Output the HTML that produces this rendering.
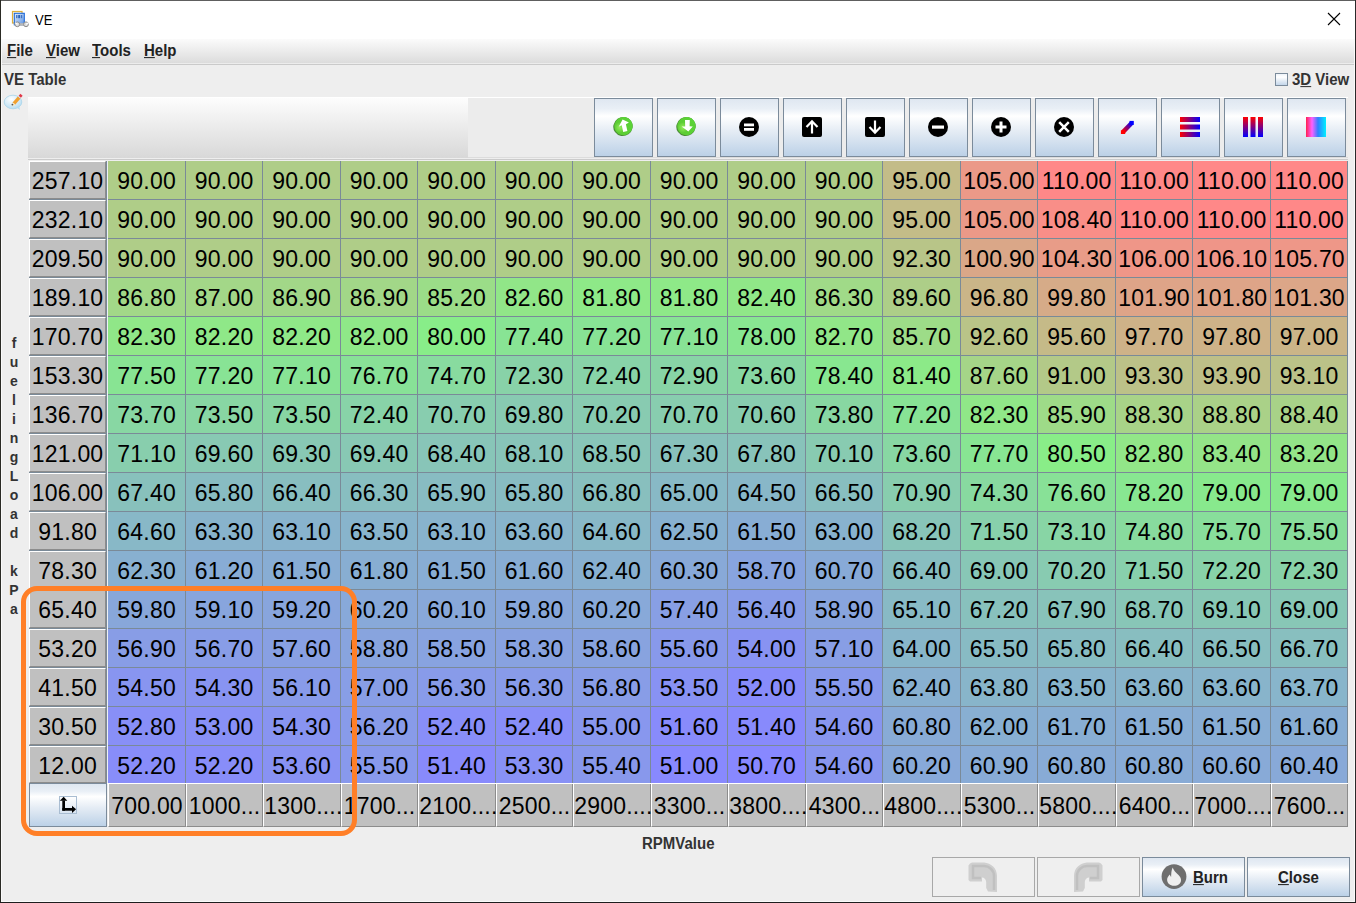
<!DOCTYPE html><html><head><meta charset="utf-8"><title>VE</title><style>
html,body{margin:0;padding:0;}
body{width:1356px;height:903px;position:relative;overflow:hidden;background:#eeeeee;font-family:"Liberation Sans",sans-serif;}
.a{position:absolute;}
.t{position:absolute;white-space:nowrap;line-height:1;}
.c{position:absolute;font-size:23px;color:#000;text-align:center;line-height:40px;letter-spacing:0.2px;text-indent:0.2px;white-space:nowrap;overflow:hidden;}
.rh{position:absolute;background:#c0c0c0;border-top:1px solid #fff;border-left:1px solid #fff;border-right:1px solid #8c8c8c;border-bottom:1px solid #8c8c8c;box-sizing:border-box;font-size:23px;line-height:38px;letter-spacing:0.2px;text-indent:0.2px;text-align:center;color:#000;white-space:nowrap;overflow:hidden;}
.hh{position:absolute;background:#c0c0c0;border-top:1px solid #fff;border-left:1px solid #fff;border-right:1px solid #8c8c8c;border-bottom:1px solid #8c8c8c;box-sizing:border-box;font-size:23px;line-height:47px;letter-spacing:0.2px;text-indent:0.2px;text-align:center;color:#000;white-space:nowrap;overflow:visible;}
.btn{position:absolute;box-sizing:border-box;border:1px solid #7b8b9b;background:linear-gradient(to bottom,#dfe7f1 0%,#e9eff6 17%,#ffffff 30%,#e6edf5 55%,#bcd1e7 100%);}
.mi{position:absolute;font-size:15px;font-weight:bold;color:#222;white-space:nowrap;line-height:1;}
.sy{transform:scaleY(1.05);transform-origin:0 12.7px;}
.u{text-decoration:underline;text-underline-offset:0.5px;}

</style></head><body>
<div class="a" style="left:0;top:0;width:1356px;height:39px;background:#fff"></div>
<div class="a" style="left:0;top:39px;width:1356px;height:24px;background:linear-gradient(to bottom,#fbfbfb,#dcdcdc)"></div>
<div class="a" style="left:0;top:63px;width:1356px;height:1px;background:#ececec"></div>
<div class="a" style="left:0;top:64px;width:1356px;height:1px;background:#cacaca"></div>
<svg class="a" style="left:11px;top:10px" width="19" height="18" viewBox="0 0 19 18">
<defs><linearGradient id="tib" x1="0" y1="0" x2="1" y2="1"><stop offset="0" stop-color="#e8f0fc"/><stop offset="1" stop-color="#5a92e2"/></linearGradient></defs>
<rect x="1.5" y="1.5" width="9.5" height="11.5" fill="#fffdf2" stroke="#dcae3c" stroke-width="1.2"/>
<rect x="3.3" y="3.3" width="10" height="11.5" fill="url(#tib)" stroke="#1f6ad8" stroke-width="1.1"/>
<rect x="5.2" y="5" width="1.2" height="3.2" fill="#2a62b8"/><rect x="7.2" y="5" width="2" height="3.2" fill="#2a62b8"/><rect x="10.2" y="5" width="1" height="3.2" fill="#2a62b8"/>
<path d="M7 14.5 H14.5" stroke="#b8b8b8" stroke-width="2.6"/>
<circle cx="6.3" cy="14.3" r="2.4" fill="#dcdcdc" stroke="#8e8e8e" stroke-width="1"/><circle cx="15" cy="14.3" r="2.4" fill="#dcdcdc" stroke="#8e8e8e" stroke-width="1"/>
<path d="M4 12.8 L6.5 14.2 M17.5 12.8 L15 14.2" stroke="#fff" stroke-width="1.2"/>
</svg>
<div class="t" style="left:35px;top:14px;font-size:13px;color:#000;transform:scaleY(1.18);transform-origin:0 11px">VE</div>
<svg class="a" style="left:1327px;top:12px" width="14" height="14" viewBox="0 0 14 14"><path d="M1 1L13 13M13 1L1 13" stroke="#000" stroke-width="1.1"/></svg>
<div class="mi sy" style="left:7px;top:43px"><span class="u">F</span>ile</div>
<div class="mi sy" style="left:46px;top:43px"><span class="u">V</span>iew</div>
<div class="mi sy" style="left:92px;top:43px"><span class="u">T</span>ools</div>
<div class="mi sy" style="left:144px;top:43px"><span class="u">H</span>elp</div>
<div class="t sy" style="left:4px;top:72px;font-size:15px;font-weight:bold;color:#333">VE Table</div>
<div class="a" style="left:1275px;top:73px;width:13px;height:13px;box-sizing:border-box;border:1px solid #7b8b9b;background:linear-gradient(to bottom,#eef3f9 0%,#ffffff 28%,#c4d6ea 100%)"></div>
<div class="t sy" style="left:1292px;top:72px;font-size:15px;font-weight:bold;color:#333">3<span class="u">D</span> View</div>
<svg class="a" style="left:0px;top:88px" width="26" height="26" viewBox="0 0 26 26">
<defs><radialGradient id="bub" cx="0.4" cy="0.3" r="0.75"><stop offset="0" stop-color="#ffffff"/><stop offset="1" stop-color="#b4dcf2"/></radialGradient></defs>
<ellipse cx="13" cy="14" rx="8.8" ry="6.8" fill="url(#bub)" stroke="#a8d4ea" stroke-width="0.8"/>
<path d="M16.5 19.5 L20 22 L19 17.5 Z" fill="#b4dcf2"/>
<path d="M13.8 15.6 L19.3 9.4" stroke="#f0a030" stroke-width="3.4"/>
<path d="M19.1 9.6 L20 8.6" stroke="#d6eaf6" stroke-width="3"/>
<path d="M19.8 8.8 L21.5 6.8" stroke="#e03848" stroke-width="3"/>
<path d="M12.3 17.6 L14.4 15.6" stroke="#f6e6c0" stroke-width="2.4"/>
<circle cx="12.4" cy="16.6" r="0.9" fill="#555"/>
</svg>
<div class="a" style="left:28px;top:97px;width:1320px;height:1px;background:#ffffff"></div>
<div class="a" style="left:28px;top:98px;width:440px;height:60px;background:linear-gradient(to bottom,#fdfdfd,#d8d8d8)"></div>
<div class="a" style="left:468px;top:98px;width:880px;height:59px;background:#ececec"></div>
<div class="a" style="left:468px;top:157px;width:880px;height:1px;background:#dcdcdc"></div>
<div class="a" style="left:28px;top:159px;width:1320px;height:1px;background:#cbcbcb"></div>
<div class="btn" style="left:594px;top:98px;width:59px;height:59px"></div>
<div class="btn" style="left:657px;top:98px;width:59px;height:59px"></div>
<div class="btn" style="left:720px;top:98px;width:59px;height:59px"></div>
<div class="btn" style="left:783px;top:98px;width:59px;height:59px"></div>
<div class="btn" style="left:846px;top:98px;width:59px;height:59px"></div>
<div class="btn" style="left:909px;top:98px;width:59px;height:59px"></div>
<div class="btn" style="left:972px;top:98px;width:59px;height:59px"></div>
<div class="btn" style="left:1035px;top:98px;width:59px;height:59px"></div>
<div class="btn" style="left:1098px;top:98px;width:59px;height:59px"></div>
<div class="btn" style="left:1161px;top:98px;width:59px;height:59px"></div>
<div class="btn" style="left:1224px;top:98px;width:59px;height:59px"></div>
<div class="btn" style="left:1287px;top:98px;width:59px;height:59px"></div>
<svg class="a" style="left:612px;top:116px" width="22" height="22" viewBox="0 0 22 22"><defs><radialGradient id="g1" cx="0.3" cy="0.45" r="0.85"><stop offset="0" stop-color="#96ec5c"/><stop offset="0.35" stop-color="#5ccc34"/><stop offset="1" stop-color="#5ad83a"/></radialGradient></defs>
<ellipse cx="11" cy="10.5" rx="9.8" ry="9.5" fill="#4a8a36" transform="rotate(-35 11 10.5)"/>
<ellipse cx="11.4" cy="10.1" rx="9.2" ry="9.1" fill="url(#g1)" transform="rotate(-35 11.4 10.1)"/>
<path d="M10.6 3.4 L16.9 6.6 L13.9 8.3 L15.4 14.9 L11.2 15.9 L9.7 9.2 L6.7 10.8 Z" fill="#fff"/></svg>
<svg class="a" style="left:675px;top:116px" width="22" height="22" viewBox="0 0 22 22"><defs><radialGradient id="g2" cx="0.3" cy="0.45" r="0.85"><stop offset="0" stop-color="#96ec5c"/><stop offset="0.35" stop-color="#5ccc34"/><stop offset="1" stop-color="#5ad83a"/></radialGradient></defs>
<ellipse cx="11" cy="10.5" rx="9.8" ry="9.5" fill="#4a8a36" transform="rotate(-35 11 10.5)"/>
<ellipse cx="11.4" cy="10.1" rx="9.2" ry="9.1" fill="url(#g2)" transform="rotate(-35 11.4 10.1)"/>
<path d="M10 3.9 L14.8 3.9 L14.6 10.3 L17.8 10.5 L13.3 15.6 L6.7 10.5 L10.2 10.4 Z" fill="#fff"/></svg>
<svg class="a" style="left:738px;top:116px" width="22" height="22" viewBox="0 0 22 22"><circle cx="11" cy="11" r="10" fill="#000"/><rect x="6" y="7.5" width="10" height="2.8" fill="#fff"/><rect x="6" y="12" width="10" height="2.8" fill="#fff"/></svg>
<svg class="a" style="left:801px;top:116px" width="22" height="22" viewBox="0 0 22 22"><rect x="1" y="1" width="20" height="20" rx="2" fill="#000"/><path d="M11 17.5 V5.5 M5.5 11 L11 5.3 L16.5 11" stroke="#fff" stroke-width="2.2" fill="none"/></svg>
<svg class="a" style="left:864px;top:116px" width="22" height="22" viewBox="0 0 22 22"><rect x="1" y="1" width="20" height="20" rx="2" fill="#000"/><path d="M11 4.5 V16.5 M5.5 11 L11 16.7 L16.5 11" stroke="#fff" stroke-width="2.2" fill="none"/></svg>
<svg class="a" style="left:927px;top:116px" width="22" height="22" viewBox="0 0 22 22"><circle cx="11" cy="11" r="10" fill="#000"/><rect x="5" y="9.5" width="12" height="3.2" fill="#fff"/></svg>
<svg class="a" style="left:990px;top:116px" width="22" height="22" viewBox="0 0 22 22"><circle cx="11" cy="11" r="10" fill="#000"/><rect x="5.5" y="9.5" width="11" height="3" fill="#fff"/><rect x="9.5" y="5.5" width="3" height="11" fill="#fff"/></svg>
<svg class="a" style="left:1053px;top:116px" width="22" height="22" viewBox="0 0 22 22"><circle cx="11" cy="11" r="10" fill="#000"/><path d="M6.2 6.2 L15.8 15.8 M15.8 6.2 L6.2 15.8" stroke="#fff" stroke-width="2.5"/></svg>
<svg class="a" style="left:1116px;top:116px" width="22" height="22" viewBox="0 0 22 22"><defs><linearGradient id="pg" x1="0" y1="1" x2="1" y2="0"><stop offset="0" stop-color="#ff0000"/><stop offset="1" stop-color="#0000ff"/></linearGradient></defs>
<path d="M7.1 15.9 L15.7 7" stroke="url(#pg)" stroke-width="4.4"/><rect x="4.9" y="14.2" width="4.3" height="3.8" fill="#ff0000"/><rect x="13.5" y="4.9" width="4.3" height="4" fill="#0000ff"/></svg>
<svg class="a" style="left:1179px;top:116px" width="22" height="22" viewBox="0 0 22 22"><defs><linearGradient id="hg" x1="0" y1="0" x2="1" y2="0"><stop offset="0" stop-color="#ff0000"/><stop offset="1" stop-color="#0000ff"/></linearGradient></defs>
<rect x="1" y="1" width="20" height="5" fill="url(#hg)"/><rect x="1" y="8.5" width="20" height="5" fill="url(#hg)"/><rect x="1" y="16" width="20" height="5" fill="url(#hg)"/></svg>
<svg class="a" style="left:1242px;top:116px" width="22" height="22" viewBox="0 0 22 22"><defs><linearGradient id="vg" x1="0" y1="0" x2="0" y2="1"><stop offset="0" stop-color="#ff0000"/><stop offset="1" stop-color="#0000ff"/></linearGradient></defs>
<rect x="1" y="1" width="5" height="20" fill="url(#vg)"/><rect x="8.5" y="1" width="5" height="20" fill="url(#vg)"/><rect x="16" y="1" width="5" height="20" fill="url(#vg)"/></svg>
<svg class="a" style="left:1305px;top:116px" width="22" height="22" viewBox="0 0 22 22"><defs><linearGradient id="sg" x1="0" y1="0" x2="1" y2="0"><stop offset="0" stop-color="#ff2050"/><stop offset="0.3" stop-color="#ff60ff"/><stop offset="0.6" stop-color="#3080ff"/><stop offset="1" stop-color="#00f0ff"/></linearGradient></defs>
<rect x="1" y="1" width="20" height="20" fill="url(#sg)"/></svg>
<div class="a" style="left:107px;top:161px;width:1241px;height:622px;background:#7a8a98"></div>
<div class="a" style="left:107px;top:161px;width:1px;height:622px;background:#eef0f4"></div>
<div class="c" style="left:108px;top:161px;width:77px;height:38px;background:#afcd88">90.00</div>
<div class="c" style="left:186px;top:161px;width:76px;height:38px;background:#afcd88">90.00</div>
<div class="c" style="left:263px;top:161px;width:77px;height:38px;background:#afcd88">90.00</div>
<div class="c" style="left:341px;top:161px;width:76px;height:38px;background:#afcd88">90.00</div>
<div class="c" style="left:418px;top:161px;width:77px;height:38px;background:#afcd88">90.00</div>
<div class="c" style="left:496px;top:161px;width:76px;height:38px;background:#afcd88">90.00</div>
<div class="c" style="left:573px;top:161px;width:77px;height:38px;background:#afcd88">90.00</div>
<div class="c" style="left:651px;top:161px;width:76px;height:38px;background:#afcd88">90.00</div>
<div class="c" style="left:728px;top:161px;width:77px;height:38px;background:#afcd88">90.00</div>
<div class="c" style="left:806px;top:161px;width:76px;height:38px;background:#afcd88">90.00</div>
<div class="c" style="left:883px;top:161px;width:77px;height:38px;background:#c3bc88">95.00</div>
<div class="c" style="left:961px;top:161px;width:76px;height:38px;background:#eb9988">105.00</div>
<div class="c" style="left:1038px;top:161px;width:77px;height:38px;background:#ff8888">110.00</div>
<div class="c" style="left:1116px;top:161px;width:76px;height:38px;background:#ff8888">110.00</div>
<div class="c" style="left:1193px;top:161px;width:77px;height:38px;background:#ff8888">110.00</div>
<div class="c" style="left:1271px;top:161px;width:76px;height:38px;background:#ff8888">110.00</div>
<div class="c" style="left:108px;top:200px;width:77px;height:38px;background:#afcd88">90.00</div>
<div class="c" style="left:186px;top:200px;width:76px;height:38px;background:#afcd88">90.00</div>
<div class="c" style="left:263px;top:200px;width:77px;height:38px;background:#afcd88">90.00</div>
<div class="c" style="left:341px;top:200px;width:76px;height:38px;background:#afcd88">90.00</div>
<div class="c" style="left:418px;top:200px;width:77px;height:38px;background:#afcd88">90.00</div>
<div class="c" style="left:496px;top:200px;width:76px;height:38px;background:#afcd88">90.00</div>
<div class="c" style="left:573px;top:200px;width:77px;height:38px;background:#afcd88">90.00</div>
<div class="c" style="left:651px;top:200px;width:76px;height:38px;background:#afcd88">90.00</div>
<div class="c" style="left:728px;top:200px;width:77px;height:38px;background:#afcd88">90.00</div>
<div class="c" style="left:806px;top:200px;width:76px;height:38px;background:#afcd88">90.00</div>
<div class="c" style="left:883px;top:200px;width:77px;height:38px;background:#c3bc88">95.00</div>
<div class="c" style="left:961px;top:200px;width:76px;height:38px;background:#eb9988">105.00</div>
<div class="c" style="left:1038px;top:200px;width:77px;height:38px;background:#f98e88">108.40</div>
<div class="c" style="left:1116px;top:200px;width:76px;height:38px;background:#ff8888">110.00</div>
<div class="c" style="left:1193px;top:200px;width:77px;height:38px;background:#ff8888">110.00</div>
<div class="c" style="left:1271px;top:200px;width:76px;height:38px;background:#ff8888">110.00</div>
<div class="c" style="left:108px;top:239px;width:77px;height:38px;background:#afcd88">90.00</div>
<div class="c" style="left:186px;top:239px;width:76px;height:38px;background:#afcd88">90.00</div>
<div class="c" style="left:263px;top:239px;width:77px;height:38px;background:#afcd88">90.00</div>
<div class="c" style="left:341px;top:239px;width:76px;height:38px;background:#afcd88">90.00</div>
<div class="c" style="left:418px;top:239px;width:77px;height:38px;background:#afcd88">90.00</div>
<div class="c" style="left:496px;top:239px;width:76px;height:38px;background:#afcd88">90.00</div>
<div class="c" style="left:573px;top:239px;width:77px;height:38px;background:#afcd88">90.00</div>
<div class="c" style="left:651px;top:239px;width:76px;height:38px;background:#afcd88">90.00</div>
<div class="c" style="left:728px;top:239px;width:77px;height:38px;background:#afcd88">90.00</div>
<div class="c" style="left:806px;top:239px;width:76px;height:38px;background:#afcd88">90.00</div>
<div class="c" style="left:883px;top:239px;width:77px;height:38px;background:#b8c588">92.30</div>
<div class="c" style="left:961px;top:239px;width:76px;height:38px;background:#daa788">100.90</div>
<div class="c" style="left:1038px;top:239px;width:77px;height:38px;background:#e89c88">104.30</div>
<div class="c" style="left:1116px;top:239px;width:76px;height:38px;background:#ef9688">106.00</div>
<div class="c" style="left:1193px;top:239px;width:77px;height:38px;background:#ef9588">106.10</div>
<div class="c" style="left:1271px;top:239px;width:76px;height:38px;background:#ee9788">105.70</div>
<div class="c" style="left:108px;top:278px;width:77px;height:38px;background:#a2d888">86.80</div>
<div class="c" style="left:186px;top:278px;width:76px;height:38px;background:#a3d788">87.00</div>
<div class="c" style="left:263px;top:278px;width:77px;height:38px;background:#a2d788">86.90</div>
<div class="c" style="left:341px;top:278px;width:76px;height:38px;background:#a2d788">86.90</div>
<div class="c" style="left:418px;top:278px;width:77px;height:38px;background:#9bdd88">85.20</div>
<div class="c" style="left:496px;top:278px;width:76px;height:38px;background:#91e688">82.60</div>
<div class="c" style="left:573px;top:278px;width:77px;height:38px;background:#8ee988">81.80</div>
<div class="c" style="left:651px;top:278px;width:76px;height:38px;background:#8ee988">81.80</div>
<div class="c" style="left:728px;top:278px;width:77px;height:38px;background:#90e788">82.40</div>
<div class="c" style="left:806px;top:278px;width:76px;height:38px;background:#a0da88">86.30</div>
<div class="c" style="left:883px;top:278px;width:77px;height:38px;background:#adce88">89.60</div>
<div class="c" style="left:961px;top:278px;width:76px;height:38px;background:#cab588">96.80</div>
<div class="c" style="left:1038px;top:278px;width:77px;height:38px;background:#d6ab88">99.80</div>
<div class="c" style="left:1116px;top:278px;width:76px;height:38px;background:#dea488">101.90</div>
<div class="c" style="left:1193px;top:278px;width:77px;height:38px;background:#dea488">101.80</div>
<div class="c" style="left:1271px;top:278px;width:76px;height:38px;background:#dca688">101.30</div>
<div class="c" style="left:108px;top:317px;width:77px;height:38px;background:#90e788">82.30</div>
<div class="c" style="left:186px;top:317px;width:76px;height:38px;background:#8fe888">82.20</div>
<div class="c" style="left:263px;top:317px;width:77px;height:38px;background:#8fe888">82.20</div>
<div class="c" style="left:341px;top:317px;width:76px;height:38px;background:#8fe888">82.00</div>
<div class="c" style="left:418px;top:317px;width:77px;height:38px;background:#88ed89">80.00</div>
<div class="c" style="left:496px;top:317px;width:76px;height:38px;background:#88e494">77.40</div>
<div class="c" style="left:573px;top:317px;width:77px;height:38px;background:#88e395">77.20</div>
<div class="c" style="left:651px;top:317px;width:76px;height:38px;background:#88e395">77.10</div>
<div class="c" style="left:728px;top:317px;width:77px;height:38px;background:#88e691">78.00</div>
<div class="c" style="left:806px;top:317px;width:76px;height:38px;background:#91e688">82.70</div>
<div class="c" style="left:883px;top:317px;width:77px;height:38px;background:#9ddc88">85.70</div>
<div class="c" style="left:961px;top:317px;width:76px;height:38px;background:#b9c488">92.60</div>
<div class="c" style="left:1038px;top:317px;width:77px;height:38px;background:#c5ba88">95.60</div>
<div class="c" style="left:1116px;top:317px;width:76px;height:38px;background:#ceb288">97.70</div>
<div class="c" style="left:1193px;top:317px;width:77px;height:38px;background:#ceb288">97.80</div>
<div class="c" style="left:1271px;top:317px;width:76px;height:38px;background:#cbb588">97.00</div>
<div class="c" style="left:108px;top:356px;width:77px;height:38px;background:#88e493">77.50</div>
<div class="c" style="left:186px;top:356px;width:76px;height:38px;background:#88e395">77.20</div>
<div class="c" style="left:263px;top:356px;width:77px;height:38px;background:#88e395">77.10</div>
<div class="c" style="left:341px;top:356px;width:76px;height:38px;background:#88e197">76.70</div>
<div class="c" style="left:418px;top:356px;width:77px;height:38px;background:#88db9f">74.70</div>
<div class="c" style="left:496px;top:356px;width:76px;height:38px;background:#88d2a8">72.30</div>
<div class="c" style="left:573px;top:356px;width:77px;height:38px;background:#88d3a8">72.40</div>
<div class="c" style="left:651px;top:356px;width:76px;height:38px;background:#88d4a6">72.90</div>
<div class="c" style="left:728px;top:356px;width:77px;height:38px;background:#88d7a3">73.60</div>
<div class="c" style="left:806px;top:356px;width:76px;height:38px;background:#88e790">78.40</div>
<div class="c" style="left:883px;top:356px;width:77px;height:38px;background:#8cea88">81.40</div>
<div class="c" style="left:961px;top:356px;width:76px;height:38px;background:#a5d588">87.60</div>
<div class="c" style="left:1038px;top:356px;width:77px;height:38px;background:#b3c988">91.00</div>
<div class="c" style="left:1116px;top:356px;width:76px;height:38px;background:#bcc188">93.30</div>
<div class="c" style="left:1193px;top:356px;width:77px;height:38px;background:#bebf88">93.90</div>
<div class="c" style="left:1271px;top:356px;width:76px;height:38px;background:#bbc288">93.10</div>
<div class="c" style="left:108px;top:395px;width:77px;height:38px;background:#88d7a3">73.70</div>
<div class="c" style="left:186px;top:395px;width:76px;height:38px;background:#88d6a3">73.50</div>
<div class="c" style="left:263px;top:395px;width:77px;height:38px;background:#88d6a3">73.50</div>
<div class="c" style="left:341px;top:395px;width:76px;height:38px;background:#88d3a8">72.40</div>
<div class="c" style="left:418px;top:395px;width:77px;height:38px;background:#88cdaf">70.70</div>
<div class="c" style="left:496px;top:395px;width:76px;height:38px;background:#88cab2">69.80</div>
<div class="c" style="left:573px;top:395px;width:77px;height:38px;background:#88cbb1">70.20</div>
<div class="c" style="left:651px;top:395px;width:76px;height:38px;background:#88cdaf">70.70</div>
<div class="c" style="left:728px;top:395px;width:77px;height:38px;background:#88ccaf">70.60</div>
<div class="c" style="left:806px;top:395px;width:76px;height:38px;background:#88d7a2">73.80</div>
<div class="c" style="left:883px;top:395px;width:77px;height:38px;background:#88e395">77.20</div>
<div class="c" style="left:961px;top:395px;width:76px;height:38px;background:#90e788">82.30</div>
<div class="c" style="left:1038px;top:395px;width:77px;height:38px;background:#9edb88">85.90</div>
<div class="c" style="left:1116px;top:395px;width:76px;height:38px;background:#a8d388">88.30</div>
<div class="c" style="left:1193px;top:395px;width:77px;height:38px;background:#aad188">88.80</div>
<div class="c" style="left:1271px;top:395px;width:76px;height:38px;background:#a8d288">88.40</div>
<div class="c" style="left:108px;top:434px;width:77px;height:38px;background:#88cead">71.10</div>
<div class="c" style="left:186px;top:434px;width:76px;height:38px;background:#88c9b3">69.60</div>
<div class="c" style="left:263px;top:434px;width:77px;height:38px;background:#88c8b4">69.30</div>
<div class="c" style="left:341px;top:434px;width:76px;height:38px;background:#88c8b4">69.40</div>
<div class="c" style="left:418px;top:434px;width:77px;height:38px;background:#88c5b8">68.40</div>
<div class="c" style="left:496px;top:434px;width:76px;height:38px;background:#88c4b9">68.10</div>
<div class="c" style="left:573px;top:434px;width:77px;height:38px;background:#88c5b8">68.50</div>
<div class="c" style="left:651px;top:434px;width:76px;height:38px;background:#88c1bc">67.30</div>
<div class="c" style="left:728px;top:434px;width:77px;height:38px;background:#88c3ba">67.80</div>
<div class="c" style="left:806px;top:434px;width:76px;height:38px;background:#88cbb1">70.10</div>
<div class="c" style="left:883px;top:434px;width:77px;height:38px;background:#88d7a3">73.60</div>
<div class="c" style="left:961px;top:434px;width:76px;height:38px;background:#88e593">77.70</div>
<div class="c" style="left:1038px;top:434px;width:77px;height:38px;background:#89ed88">80.50</div>
<div class="c" style="left:1116px;top:434px;width:76px;height:38px;background:#92e688">82.80</div>
<div class="c" style="left:1193px;top:434px;width:77px;height:38px;background:#94e488">83.40</div>
<div class="c" style="left:1271px;top:434px;width:76px;height:38px;background:#93e488">83.20</div>
<div class="c" style="left:108px;top:473px;width:77px;height:38px;background:#88c1bc">67.40</div>
<div class="c" style="left:186px;top:473px;width:76px;height:38px;background:#88bcc2">65.80</div>
<div class="c" style="left:263px;top:473px;width:77px;height:38px;background:#88bec0">66.40</div>
<div class="c" style="left:341px;top:473px;width:76px;height:38px;background:#88bec0">66.30</div>
<div class="c" style="left:418px;top:473px;width:77px;height:38px;background:#88bcc2">65.90</div>
<div class="c" style="left:496px;top:473px;width:76px;height:38px;background:#88bcc2">65.80</div>
<div class="c" style="left:573px;top:473px;width:77px;height:38px;background:#88bfbe">66.80</div>
<div class="c" style="left:651px;top:473px;width:76px;height:38px;background:#88b9c6">65.00</div>
<div class="c" style="left:728px;top:473px;width:77px;height:38px;background:#88b7c8">64.50</div>
<div class="c" style="left:806px;top:473px;width:76px;height:38px;background:#88bec0">66.50</div>
<div class="c" style="left:883px;top:473px;width:77px;height:38px;background:#88cdae">70.90</div>
<div class="c" style="left:961px;top:473px;width:76px;height:38px;background:#88d9a0">74.30</div>
<div class="c" style="left:1038px;top:473px;width:77px;height:38px;background:#88e197">76.60</div>
<div class="c" style="left:1116px;top:473px;width:76px;height:38px;background:#88e791">78.20</div>
<div class="c" style="left:1193px;top:473px;width:77px;height:38px;background:#88e98d">79.00</div>
<div class="c" style="left:1271px;top:473px;width:76px;height:38px;background:#88e98d">79.00</div>
<div class="c" style="left:108px;top:512px;width:77px;height:38px;background:#88b8c7">64.60</div>
<div class="c" style="left:186px;top:512px;width:76px;height:38px;background:#88b3cc">63.30</div>
<div class="c" style="left:263px;top:512px;width:77px;height:38px;background:#88b3cd">63.10</div>
<div class="c" style="left:341px;top:512px;width:76px;height:38px;background:#88b4cc">63.50</div>
<div class="c" style="left:418px;top:512px;width:77px;height:38px;background:#88b3cd">63.10</div>
<div class="c" style="left:496px;top:512px;width:76px;height:38px;background:#88b4cb">63.60</div>
<div class="c" style="left:573px;top:512px;width:77px;height:38px;background:#88b8c7">64.60</div>
<div class="c" style="left:651px;top:512px;width:76px;height:38px;background:#88b1d0">62.50</div>
<div class="c" style="left:728px;top:512px;width:77px;height:38px;background:#88add4">61.50</div>
<div class="c" style="left:806px;top:512px;width:76px;height:38px;background:#88b2ce">63.00</div>
<div class="c" style="left:883px;top:512px;width:77px;height:38px;background:#88c4b9">68.20</div>
<div class="c" style="left:961px;top:512px;width:76px;height:38px;background:#88d0ac">71.50</div>
<div class="c" style="left:1038px;top:512px;width:77px;height:38px;background:#88d5a5">73.10</div>
<div class="c" style="left:1116px;top:512px;width:76px;height:38px;background:#88db9e">74.80</div>
<div class="c" style="left:1193px;top:512px;width:77px;height:38px;background:#88de9b">75.70</div>
<div class="c" style="left:1271px;top:512px;width:76px;height:38px;background:#88dd9b">75.50</div>
<div class="c" style="left:108px;top:551px;width:77px;height:38px;background:#88b0d0">62.30</div>
<div class="c" style="left:186px;top:551px;width:76px;height:38px;background:#88acd5">61.20</div>
<div class="c" style="left:263px;top:551px;width:77px;height:38px;background:#88add4">61.50</div>
<div class="c" style="left:341px;top:551px;width:76px;height:38px;background:#88aed2">61.80</div>
<div class="c" style="left:418px;top:551px;width:77px;height:38px;background:#88add4">61.50</div>
<div class="c" style="left:496px;top:551px;width:76px;height:38px;background:#88add3">61.60</div>
<div class="c" style="left:573px;top:551px;width:77px;height:38px;background:#88b0d0">62.40</div>
<div class="c" style="left:651px;top:551px;width:76px;height:38px;background:#88a9d8">60.30</div>
<div class="c" style="left:728px;top:551px;width:77px;height:38px;background:#88a4df">58.70</div>
<div class="c" style="left:806px;top:551px;width:76px;height:38px;background:#88aad7">60.70</div>
<div class="c" style="left:883px;top:551px;width:77px;height:38px;background:#88bec0">66.40</div>
<div class="c" style="left:961px;top:551px;width:76px;height:38px;background:#88c7b6">69.00</div>
<div class="c" style="left:1038px;top:551px;width:77px;height:38px;background:#88cbb1">70.20</div>
<div class="c" style="left:1116px;top:551px;width:76px;height:38px;background:#88d0ac">71.50</div>
<div class="c" style="left:1193px;top:551px;width:77px;height:38px;background:#88d2a9">72.20</div>
<div class="c" style="left:1271px;top:551px;width:76px;height:38px;background:#88d2a8">72.30</div>
<div class="c" style="left:108px;top:590px;width:77px;height:38px;background:#88a7da">59.80</div>
<div class="c" style="left:186px;top:590px;width:76px;height:38px;background:#88a5dd">59.10</div>
<div class="c" style="left:263px;top:590px;width:77px;height:38px;background:#88a5dd">59.20</div>
<div class="c" style="left:341px;top:590px;width:76px;height:38px;background:#88a9d9">60.20</div>
<div class="c" style="left:418px;top:590px;width:77px;height:38px;background:#88a8d9">60.10</div>
<div class="c" style="left:496px;top:590px;width:76px;height:38px;background:#88a7da">59.80</div>
<div class="c" style="left:573px;top:590px;width:77px;height:38px;background:#88a9d9">60.20</div>
<div class="c" style="left:651px;top:590px;width:76px;height:38px;background:#889fe4">57.40</div>
<div class="c" style="left:728px;top:590px;width:77px;height:38px;background:#889ce8">56.40</div>
<div class="c" style="left:806px;top:590px;width:76px;height:38px;background:#88a4de">58.90</div>
<div class="c" style="left:883px;top:590px;width:77px;height:38px;background:#88bac5">65.10</div>
<div class="c" style="left:961px;top:590px;width:76px;height:38px;background:#88c1bd">67.20</div>
<div class="c" style="left:1038px;top:590px;width:77px;height:38px;background:#88c3ba">67.90</div>
<div class="c" style="left:1116px;top:590px;width:76px;height:38px;background:#88c6b7">68.70</div>
<div class="c" style="left:1193px;top:590px;width:77px;height:38px;background:#88c7b5">69.10</div>
<div class="c" style="left:1271px;top:590px;width:76px;height:38px;background:#88c7b6">69.00</div>
<div class="c" style="left:108px;top:629px;width:77px;height:38px;background:#889de6">56.90</div>
<div class="c" style="left:186px;top:629px;width:76px;height:38px;background:#889de7">56.70</div>
<div class="c" style="left:263px;top:629px;width:77px;height:38px;background:#88a0e3">57.60</div>
<div class="c" style="left:341px;top:629px;width:76px;height:38px;background:#88a4de">58.80</div>
<div class="c" style="left:418px;top:629px;width:77px;height:38px;background:#88a3e0">58.50</div>
<div class="c" style="left:496px;top:629px;width:76px;height:38px;background:#88a2e0">58.30</div>
<div class="c" style="left:573px;top:629px;width:77px;height:38px;background:#88a3df">58.60</div>
<div class="c" style="left:651px;top:629px;width:76px;height:38px;background:#8899eb">55.60</div>
<div class="c" style="left:728px;top:629px;width:77px;height:38px;background:#8893f2">54.00</div>
<div class="c" style="left:806px;top:629px;width:76px;height:38px;background:#889ee5">57.10</div>
<div class="c" style="left:883px;top:629px;width:77px;height:38px;background:#88b6ca">64.00</div>
<div class="c" style="left:961px;top:629px;width:76px;height:38px;background:#88bbc4">65.50</div>
<div class="c" style="left:1038px;top:629px;width:77px;height:38px;background:#88bcc2">65.80</div>
<div class="c" style="left:1116px;top:629px;width:76px;height:38px;background:#88bec0">66.40</div>
<div class="c" style="left:1193px;top:629px;width:77px;height:38px;background:#88bec0">66.50</div>
<div class="c" style="left:1271px;top:629px;width:76px;height:38px;background:#88bfbf">66.70</div>
<div class="c" style="left:108px;top:668px;width:77px;height:38px;background:#8895f0">54.50</div>
<div class="c" style="left:186px;top:668px;width:76px;height:38px;background:#8894f1">54.30</div>
<div class="c" style="left:263px;top:668px;width:77px;height:38px;background:#889be9">56.10</div>
<div class="c" style="left:341px;top:668px;width:76px;height:38px;background:#889ee6">57.00</div>
<div class="c" style="left:418px;top:668px;width:77px;height:38px;background:#889be9">56.30</div>
<div class="c" style="left:496px;top:668px;width:76px;height:38px;background:#889be9">56.30</div>
<div class="c" style="left:573px;top:668px;width:77px;height:38px;background:#889de7">56.80</div>
<div class="c" style="left:651px;top:668px;width:76px;height:38px;background:#8892f4">53.50</div>
<div class="c" style="left:728px;top:668px;width:77px;height:38px;background:#888cfa">52.00</div>
<div class="c" style="left:806px;top:668px;width:76px;height:38px;background:#8899ec">55.50</div>
<div class="c" style="left:883px;top:668px;width:77px;height:38px;background:#88b0d0">62.40</div>
<div class="c" style="left:961px;top:668px;width:76px;height:38px;background:#88b5ca">63.80</div>
<div class="c" style="left:1038px;top:668px;width:77px;height:38px;background:#88b4cc">63.50</div>
<div class="c" style="left:1116px;top:668px;width:76px;height:38px;background:#88b4cb">63.60</div>
<div class="c" style="left:1193px;top:668px;width:77px;height:38px;background:#88b4cb">63.60</div>
<div class="c" style="left:1271px;top:668px;width:76px;height:38px;background:#88b5cb">63.70</div>
<div class="c" style="left:108px;top:707px;width:77px;height:38px;background:#888ff7">52.80</div>
<div class="c" style="left:186px;top:707px;width:76px;height:38px;background:#8890f6">53.00</div>
<div class="c" style="left:263px;top:707px;width:77px;height:38px;background:#8894f1">54.30</div>
<div class="c" style="left:341px;top:707px;width:76px;height:38px;background:#889be9">56.20</div>
<div class="c" style="left:418px;top:707px;width:77px;height:38px;background:#888ef8">52.40</div>
<div class="c" style="left:496px;top:707px;width:76px;height:38px;background:#888ef8">52.40</div>
<div class="c" style="left:573px;top:707px;width:77px;height:38px;background:#8897ee">55.00</div>
<div class="c" style="left:651px;top:707px;width:76px;height:38px;background:#888bfb">51.60</div>
<div class="c" style="left:728px;top:707px;width:77px;height:38px;background:#888afc">51.40</div>
<div class="c" style="left:806px;top:707px;width:76px;height:38px;background:#8895ef">54.60</div>
<div class="c" style="left:883px;top:707px;width:77px;height:38px;background:#88abd6">60.80</div>
<div class="c" style="left:961px;top:707px;width:76px;height:38px;background:#88afd2">62.00</div>
<div class="c" style="left:1038px;top:707px;width:77px;height:38px;background:#88aed3">61.70</div>
<div class="c" style="left:1116px;top:707px;width:76px;height:38px;background:#88add4">61.50</div>
<div class="c" style="left:1193px;top:707px;width:77px;height:38px;background:#88add4">61.50</div>
<div class="c" style="left:1271px;top:707px;width:76px;height:38px;background:#88add3">61.60</div>
<div class="c" style="left:108px;top:746px;width:77px;height:38px;background:#888df9">52.20</div>
<div class="c" style="left:186px;top:746px;width:76px;height:38px;background:#888df9">52.20</div>
<div class="c" style="left:263px;top:746px;width:77px;height:38px;background:#8892f3">53.60</div>
<div class="c" style="left:341px;top:746px;width:76px;height:38px;background:#8899ec">55.50</div>
<div class="c" style="left:418px;top:746px;width:77px;height:38px;background:#888afc">51.40</div>
<div class="c" style="left:496px;top:746px;width:76px;height:38px;background:#8891f5">53.30</div>
<div class="c" style="left:573px;top:746px;width:77px;height:38px;background:#8898ec">55.40</div>
<div class="c" style="left:651px;top:746px;width:76px;height:38px;background:#8889fe">51.00</div>
<div class="c" style="left:728px;top:746px;width:77px;height:38px;background:#8888ff">50.70</div>
<div class="c" style="left:806px;top:746px;width:76px;height:38px;background:#8895ef">54.60</div>
<div class="c" style="left:883px;top:746px;width:77px;height:38px;background:#88a9d9">60.20</div>
<div class="c" style="left:961px;top:746px;width:76px;height:38px;background:#88abd6">60.90</div>
<div class="c" style="left:1038px;top:746px;width:77px;height:38px;background:#88abd6">60.80</div>
<div class="c" style="left:1116px;top:746px;width:76px;height:38px;background:#88abd6">60.80</div>
<div class="c" style="left:1193px;top:746px;width:77px;height:38px;background:#88aad7">60.60</div>
<div class="c" style="left:1271px;top:746px;width:76px;height:38px;background:#88a9d8">60.40</div>
<div class="a" style="left:107px;top:783px;width:1241px;height:1px;background:#ffffff"></div>
<div class="a" style="left:29px;top:161px;width:78px;height:622px;background:#7a8a98"></div>
<div class="rh" style="left:29px;top:161px;width:77px;height:38px;line-height:38px">257.10</div>
<div class="rh" style="left:29px;top:200px;width:77px;height:38px;line-height:38px">232.10</div>
<div class="rh" style="left:29px;top:239px;width:77px;height:38px;line-height:38px">209.50</div>
<div class="rh" style="left:29px;top:278px;width:77px;height:38px;line-height:38px">189.10</div>
<div class="rh" style="left:29px;top:317px;width:77px;height:38px;line-height:38px">170.70</div>
<div class="rh" style="left:29px;top:356px;width:77px;height:38px;line-height:38px">153.30</div>
<div class="rh" style="left:29px;top:395px;width:77px;height:38px;line-height:38px">136.70</div>
<div class="rh" style="left:29px;top:434px;width:77px;height:38px;line-height:38px">121.00</div>
<div class="rh" style="left:29px;top:473px;width:77px;height:38px;line-height:38px">106.00</div>
<div class="rh" style="left:29px;top:512px;width:77px;height:38px;line-height:38px">91.80</div>
<div class="rh" style="left:29px;top:551px;width:77px;height:38px;line-height:38px">78.30</div>
<div class="rh" style="left:29px;top:590px;width:77px;height:38px;line-height:38px">65.40</div>
<div class="rh" style="left:29px;top:629px;width:77px;height:38px;line-height:38px">53.20</div>
<div class="rh" style="left:29px;top:668px;width:77px;height:38px;line-height:38px">41.50</div>
<div class="rh" style="left:29px;top:707px;width:77px;height:38px;line-height:38px">30.50</div>
<div class="rh" style="left:29px;top:746px;width:77px;height:37px;line-height:38px">12.00</div>
<div class="hh" style="left:108px;top:784px;width:78px;height:43px;border-top:0;border-left:1px solid #fff;line-height:45px">700.00</div>
<div class="hh" style="left:186px;top:784px;width:77px;height:43px;border-top:0;border-left:1px solid #fff;line-height:45px">1000...</div>
<div class="hh" style="left:263px;top:784px;width:78px;height:43px;border-top:0;border-left:1px solid #fff;line-height:45px">1300....</div>
<div class="hh" style="left:341px;top:784px;width:77px;height:43px;border-top:0;border-left:1px solid #fff;line-height:45px">1700...</div>
<div class="hh" style="left:418px;top:784px;width:78px;height:43px;border-top:0;border-left:1px solid #fff;line-height:45px">2100....</div>
<div class="hh" style="left:496px;top:784px;width:77px;height:43px;border-top:0;border-left:1px solid #fff;line-height:45px">2500...</div>
<div class="hh" style="left:573px;top:784px;width:78px;height:43px;border-top:0;border-left:1px solid #fff;line-height:45px">2900....</div>
<div class="hh" style="left:651px;top:784px;width:77px;height:43px;border-top:0;border-left:1px solid #fff;line-height:45px">3300...</div>
<div class="hh" style="left:728px;top:784px;width:78px;height:43px;border-top:0;border-left:1px solid #fff;line-height:45px">3800....</div>
<div class="hh" style="left:806px;top:784px;width:77px;height:43px;border-top:0;border-left:1px solid #fff;line-height:45px">4300...</div>
<div class="hh" style="left:883px;top:784px;width:78px;height:43px;border-top:0;border-left:1px solid #fff;line-height:45px">4800....</div>
<div class="hh" style="left:961px;top:784px;width:77px;height:43px;border-top:0;border-left:1px solid #fff;line-height:45px">5300...</div>
<div class="hh" style="left:1038px;top:784px;width:78px;height:43px;border-top:0;border-left:1px solid #fff;line-height:45px">5800....</div>
<div class="hh" style="left:1116px;top:784px;width:77px;height:43px;border-top:0;border-left:1px solid #fff;line-height:45px">6400...</div>
<div class="hh" style="left:1193px;top:784px;width:78px;height:43px;border-top:0;border-left:1px solid #fff;line-height:45px">7000....</div>
<div class="hh" style="left:1271px;top:784px;width:77px;height:43px;border-top:0;border-left:1px solid #fff;line-height:45px">7600...</div>
<div class="btn" style="left:29px;top:783px;width:78px;height:44px"></div>
<svg class="a" style="left:59px;top:796px" width="18" height="18" viewBox="0 0 18 18">
<rect x="0.5" y="0.5" width="17" height="17" fill="none" stroke="#a9bdd2" stroke-width="1"/>
<rect x="3.3" y="4.5" width="2.7" height="10.2" fill="#000"/><rect x="3.3" y="12" width="10" height="2.7" fill="#000"/>
<path d="M0.8 4.8 L4.65 0.7 L8.3 4.8 Z" fill="#000"/><path d="M13 9.8 L17.1 13.35 L13 17 Z" fill="#000"/>
</svg>
<div class="t" style="left:8px;width:12px;text-align:center;top:336px;font-size:14px;font-weight:bold;color:#333">f</div>
<div class="t" style="left:8px;width:12px;text-align:center;top:355px;font-size:14px;font-weight:bold;color:#333">u</div>
<div class="t" style="left:8px;width:12px;text-align:center;top:374px;font-size:14px;font-weight:bold;color:#333">e</div>
<div class="t" style="left:8px;width:12px;text-align:center;top:393px;font-size:14px;font-weight:bold;color:#333">l</div>
<div class="t" style="left:8px;width:12px;text-align:center;top:412px;font-size:14px;font-weight:bold;color:#333">i</div>
<div class="t" style="left:8px;width:12px;text-align:center;top:431px;font-size:14px;font-weight:bold;color:#333">n</div>
<div class="t" style="left:8px;width:12px;text-align:center;top:450px;font-size:14px;font-weight:bold;color:#333">g</div>
<div class="t" style="left:8px;width:12px;text-align:center;top:469px;font-size:14px;font-weight:bold;color:#333">L</div>
<div class="t" style="left:8px;width:12px;text-align:center;top:488px;font-size:14px;font-weight:bold;color:#333">o</div>
<div class="t" style="left:8px;width:12px;text-align:center;top:507px;font-size:14px;font-weight:bold;color:#333">a</div>
<div class="t" style="left:8px;width:12px;text-align:center;top:526px;font-size:14px;font-weight:bold;color:#333">d</div>
<div class="t" style="left:8px;width:12px;text-align:center;top:564px;font-size:14px;font-weight:bold;color:#333">k</div>
<div class="t" style="left:8px;width:12px;text-align:center;top:583px;font-size:14px;font-weight:bold;color:#333">P</div>
<div class="t" style="left:8px;width:12px;text-align:center;top:602px;font-size:14px;font-weight:bold;color:#333">a</div>
<div class="a" style="left:21px;top:586px;width:336px;height:250px;box-sizing:border-box;border:5px solid #ff7f27;border-radius:16px"></div>
<div class="t sy" style="left:642px;top:836px;font-size:15px;font-weight:bold;color:#333">RPMValue</div>
<div class="a" style="left:932px;top:857px;width:103px;height:40px;box-sizing:border-box;border:1px solid #a8a8a8;background:#efefef"></div>
<div class="a" style="left:1037px;top:857px;width:103px;height:40px;box-sizing:border-box;border:1px solid #a8a8a8;background:#efefef"></div>
<svg class="a" style="left:968px;top:862px" width="30" height="30" viewBox="0 0 30 30"><g transform="translate(30 0) scale(-1 1)"><path d="M1 30 V14 C1 6 7 1 14 0.5 H26 L28 1.5 L29.5 3.5 V18 L28 19.5 H16 V15.5 C14 15.5 12 17 11.8 20 V26 L10 29.5 Z" fill="#cfcfcf"/><path d="M4 28 V14 C4 8 9 4 14 4 H25 V16 H17" fill="none" stroke="#c0c0c0" stroke-width="2.5"/></g></svg>
<svg class="a" style="left:1073px;top:862px" width="30" height="30" viewBox="0 0 30 30"><path d="M1 30 V14 C1 6 7 1 14 0.5 H26 L28 1.5 L29.5 3.5 V18 L28 19.5 H16 V15.5 C14 15.5 12 17 11.8 20 V26 L10 29.5 Z" fill="#cfcfcf"/><path d="M4 28 V14 C4 8 9 4 14 4 H25 V16 H17" fill="none" stroke="#c0c0c0" stroke-width="2.5"/></svg>
<div class="btn" style="left:1142px;top:857px;width:103px;height:40px"></div>
<div class="btn" style="left:1247px;top:857px;width:103px;height:40px"></div>
<svg class="a" style="left:1161px;top:864px" width="26" height="26" viewBox="0 0 26 26">
<circle cx="13" cy="12.6" r="12.4" fill="#6e6e6e"/>
<path d="M11.7 3.5 C12.5 6.5 15 8.5 17.5 11 C19.5 13 20 14.5 20 16.2 C20 19.5 17 21.8 13 21.8 C9 21.8 6.1 19.2 6.1 15.8 C6.1 13.6 7.3 12.2 8.8 10.6 C9.1 11.6 9.4 12.3 10.1 12.9 C10.3 9.5 10.2 6.2 11.7 3.5 Z" fill="#efefef"/>
</svg>
<div class="t sy" style="left:1193px;top:870px;font-size:15px;font-weight:bold;color:#222"><span class="u">B</span>urn</div>
<div class="t sy" style="left:1278px;top:870px;font-size:15px;font-weight:bold;color:#222"><span class="u">C</span>lose</div>
<div class="a" style="left:1px;top:39px;width:1px;height:863px;background:#fafafa"></div>
<div class="a" style="left:1354px;top:39px;width:1px;height:863px;background:#fafafa"></div>
<div class="a" style="left:1px;top:901px;width:1354px;height:1px;background:#fafafa"></div>
<div class="a" style="left:0;top:0;width:1356px;height:1px;background:#5e5e5e"></div>
<div class="a" style="left:0;top:0;width:1px;height:903px;background:#2a2a24"></div>
<div class="a" style="left:1355px;top:0;width:1px;height:903px;background:#2a2a2a"></div>
<div class="a" style="left:0;top:902px;width:1356px;height:1px;background:#1e1e1e"></div>
</body></html>
